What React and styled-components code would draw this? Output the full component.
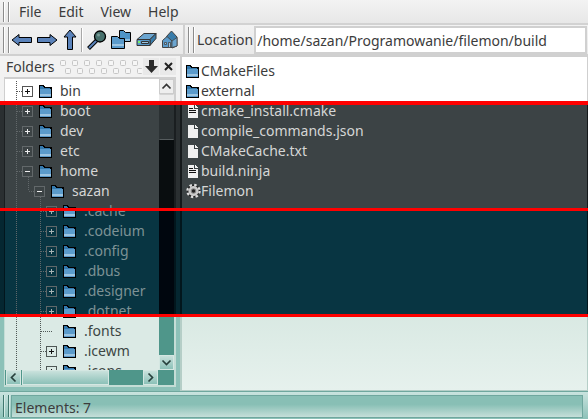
import React from "react";
import styled, { createGlobalStyle, css } from "styled-components";

const BANDS = [103, 209, 315];

const bands = (a, b, c, d) => css`
  background: linear-gradient(
    to bottom,
    ${a} 0 ${BANDS[0]}px,
    ${b} ${BANDS[0]}px ${BANDS[1]}px,
    ${c} ${BANDS[1]}px ${BANDS[2]}px,
    ${d} ${BANDS[2]}px
  ) fixed;
`;

const Global = createGlobalStyle`
  * { box-sizing: border-box; }
  html, body, #root { height: 100%; margin: 0; }
  body { overflow: hidden; font: 14px/20px "Noto Sans", "Open Sans", sans-serif; color: #3c3c3c; }
  button { font: inherit; color: inherit; border: 0; padding: 0; background: none; display: grid; place-items: center; }
  svg { display: block; }
`;

const Window = styled.div`
  position: relative;
  height: 100vh;
  display: flex;
  flex-direction: column;
  ${bands("#f2f2f2", "#2a2f31", "#052731", "#8cc1b8")}
`;

const MenuBar = styled.nav`
  display: flex;
  align-items: center;
  height: 25px;
  padding: 0 3px;
  flex: none;
  background: linear-gradient(#f3f3f3, #e7e7e7);
  border-bottom: 2px solid #d2d2d2;
`;
const MenuItem = styled.button`
  height: 22px;
  margin-right: 17px;
`;
const Grip = styled.span`
  flex: none;
  width: 6px;
  height: ${(p) => p.$h}px;
  margin-right: ${(p) => p.$gap}px;
  border: 1px solid ${(p) => p.$color || "#8c8c8c"};
  border-width: 0 1px;
  box-shadow: inset 1px 0 ${(p) => p.$shine || "#fff"}, 1px 0 ${(p) => p.$shine || "#fff"};
`;

const ToolRow = styled.div`
  display: flex;
  flex: none;
  height: 31px;
  border-bottom: 2px solid #d0d0d0;
`;
const ToolBar = styled.div`
  display: flex;
  align-items: center;
  width: 185px;
  padding-left: 3px;
  border-right: 2px solid #cfcfcf;
  background: linear-gradient(#f2f2f2, #e9e9e9);
`;
const ToolButton = styled.button`
  width: ${(p) => p.$w}px;
  height: 26px;
`;
const Separator = styled.span`
  width: 2px;
  height: 24px;
  margin-right: 3px;
  border-left: 1px solid #a8a8a8;
  border-right: 1px solid #fff;
`;
const LocationBar = styled.label`
  display: flex;
  align-items: center;
  flex: 1;
  padding-left: 3px;
  background: linear-gradient(#f2f2f2, #e9e9e9);
`;
const LocationInput = styled.input`
  flex: 1;
  min-width: 0;
  height: 28px;
  margin: 1px 1px 0 1px;
  padding: 0 1px;
  font: inherit;
  color: inherit;
  background: #fff;
  border: 2px solid #d0d0d0;
  outline: none;
`;

const Main = styled.main`
  flex: 1;
  min-height: 0;
  display: flex;
`;
const Side = styled.aside`
  width: 180px;
  flex: none;
  display: flex;
  flex-direction: column;
  padding: 0 4px 4px;
`;
const SideHeader = styled.header`
  display: flex;
  align-items: center;
  height: 21px;
  flex: none;
  padding-left: 2px;
`;
const Dots = styled.svg`
  margin-left: 6px;
  flex: 1;
  min-width: 0;
`;
const HeaderButton = styled.button`
  width: 16px;
  height: 17px;
  margin-left: 1px;
  background: #e9e9e9;
`;
const TreeFrame = styled.div`
  flex: 1;
  min-height: 0;
  display: grid;
  grid-template-columns: minmax(0, 1fr) 15px;
  grid-template-rows: minmax(0, 1fr) 15px;
  padding: 2px 2px 2px 1px;
  ${bands("#cfcfcf", "#1a1e20", "#02161d", "#c4ddd6")}
`;
const Tree = styled.ul`
  list-style: none;
  margin: 0;
  padding: 2px 0 0 1px;
  overflow: hidden;
  ${bands("#fff", "#3c4345", "#083542", "#dbeae5")}
`;
const TreeRow = styled.li`
  height: 20px;
  display: flex;
  align-items: center;
  color: ${(p) => p.$color};
`;
const Guides = styled.svg`
  flex: none;
`;
const RowLabel = styled.span`
  margin-left: 8px;
  white-space: nowrap;
`;
const VScroll = styled.div`
  display: flex;
  flex-direction: column;
  ${bands("#d8d8d8", "#090d0f", "#00060e", "#4f968a")}
`;
const VThumb = styled.div`
  height: 46px;
  border: 1px solid;
  border-color: #d4d4d4 transparent #565c5e;
  ${bands("#ececec", "#2b3133", "#00060e", "#4f968a")}
`;
const ScrollButton = styled.button`
  width: 15px;
  height: 15px;
  flex: none;
  color: #27403c;
  background: linear-gradient(#c9e1dc, #8cc1b8);
  border: 1px solid #d4e7e2;
  ${(p) => p.$light && css`
    color: #333;
    background: #eee;
    border-color: #ccc;
  `}
`;
const Spacer = styled.span`
  flex: 1;
`;
const HScroll = styled.div`
  grid-column: 1 / -1;
  display: flex;
  padding-left: 1px;
  background: #4f968a;
`;
const HThumb = styled.div`
  width: 87px;
  margin-left: 1px;
  background: linear-gradient(#c9e1dc, #8cc1b8);
  border: 1px solid #d4e7e2;
`;
const Corner = styled.span`
  width: 16px;
`;

const FileFrame = styled.section`
  flex: 1;
  min-width: 0;
  display: flex;
  padding: 1px 1px 1px 2px;
  ${bands("#cfcfcf", "#15191b", "#02161d", "#b5cec7")}
`;
const FileList = styled.ul`
  flex: 1;
  list-style: none;
  margin: 0;
  padding: 4px;
  background: linear-gradient(
    #fff 0 103px, #3c4345 103px 209px, #083542 209px 315px, #d9e9e3 315px, #e6f1ed 390px
  ) fixed;
`;
const FileRow = styled.li`
  display: flex;
  align-items: center;
  height: 20px;
  color: ${(p) => p.$color};
`;
const IconBox = styled.span`
  width: 15px;
  flex: none;
  display: grid;
  justify-items: start;
`;

const StatusBar = styled.footer`
  display: flex;
  flex: none;
  height: 28px;
  padding: 3px 5px 1px 3px;
  background: linear-gradient(#c9e3de, #8cc1b8);
  border-top: 1px solid #6fa79e;
`;
const StatusText = styled.output`
  flex: 1;
  padding-left: 3px;
  line-height: 23px;
  background: linear-gradient(#88bfb5 40%, #c5dfd9);
  border: 1px solid #6fa79e;
`;
const BandLine = styled.div`
  position: absolute;
  left: 0;
  right: 0;
  top: ${(p) => p.$top}px;
  height: ${(p) => p.$h}px;
  background: #f00;
`;

const Folder = () => (
  <svg width="13" height="13" shapeRendering="crispEdges">
    <path d="M0 0h5v1h1v1h7v11H0z" fill="#000" />
    <path d="M1 1h3v1h1v1h6v1H1z" fill="#3479ad" />
    <path d="M1 4h11v8H1z" fill="#5b9bcb" />
    <path d="M1 9h11v2H1z" fill="#9cc5e2" />
  </svg>
);
const Doc = ({ lines }) => (
  <svg width="13" height="14" shapeRendering="crispEdges">
    <path d="M2 1h6v4h4v9H2zM9 1h1v1h1v1h1v1H9z" fill="#f0f0f0" />
    {lines && <path d="M3 4.500h4M3 6.500h7M3 8.500h7" stroke="#111" />}
  </svg>
);
const Gear = () => (
  <svg width="15" height="16" viewBox="0 0 16 16">
    <circle cx="8" cy="8" r="6.800" fill="#222" />
    <circle cx="8" cy="8" r="6.500" fill="none" stroke="#ddd" strokeWidth="2.400" strokeDasharray="2.600 2.505" />
    <circle cx="8" cy="8" r="4.200" fill="#888" stroke="#ccc" strokeWidth="2.500" />
    <circle cx="8" cy="8" r="1.800" fill="#222" />
  </svg>
);
const Arrow = ({ dir }) => {
  if (dir === "up")
    return (
      <svg width="14" height="21">
        <path d="M7 1L13 8H9.500V20.500H4.500V8H1z" fill="#5b83bb" stroke="#000" />
      </svg>
    );
  return (
    <svg width="22" height="14">
      <path
        d={dir === "left" ? "M1 7L8 1.500V4.500H20.500V9.500H8V12.500z" : "M21 7L14 1.500V4.500H1.500V9.500H14V12.500z"}
        fill="#5b83bb"
        stroke="#000"
      />
    </svg>
  );
};
const Magnifier = () => (
  <svg width="20" height="20">
    <path d="M1.500 18.500L10 10" stroke="#000" strokeWidth="4" />
    <path d="M2 18L10 10" stroke="#5b83bb" strokeWidth="2" />
    <circle cx="13" cy="6.500" r="5.500" fill="#47706c" stroke="#000" strokeWidth="1.300" />
    <circle cx="11.500" cy="5" r="1.500" fill="#7a9c98" />
  </svg>
);
const Folders = () => (
  <svg width="20" height="20">
    <path d="M8.500 .5h4l2 2h5v9h-11z" fill="#4f94c6" stroke="#000" />
    <path d="M9 9h10v2H9z" fill="#8fbfe0" />
    <path d="M.5 6.500h6l2 2h5v10H.5z" fill="#5b9bcb" stroke="#000" />
    <path d="M1 14h12v2H1z" fill="#9cc5e2" />
  </svg>
);
const Drive = () => (
  <svg width="21" height="16">
    <path d="M1 7.500L8 1.500h12l-6 6z" fill="#6ba5d0" stroke="#333" />
    <path d="M14 7.500l6-6v5l-6 7z" fill="#397caa" stroke="#333" />
    <path d="M1 7.500h13v6H1z" fill="#5b9bcb" stroke="#333" />
    <path d="M5.500 9.500h7v2h-7z" fill="#9cc5e2" stroke="#333" />
    <path d="M2 9h2v2H2z" fill="#78ed69" />
  </svg>
);
const House = () => (
  <svg width="18" height="19">
    <path d="M5.500 6.500L10.500 1l5.500 6v9l-5 2z" fill="#397caa" stroke="#444" />
    <path d="M1.500 10.500L6 6.500l5 4.500v6.500H1.500z" fill="#5b9bcb" stroke="#444" />
    <path d="M3.500 12.500h2v2h-2zM7.500 12.500h2v5h-2z" fill="#9cc5e2" stroke="#444" strokeWidth=".8" />
    <path d="M11 11l5-3.500v8.500l-5 1.500z" fill="#6ba5d0" stroke="#444" strokeWidth=".8" />
  </svg>
);
const Chevron = ({ d }) => (
  <svg width="11" height="11" fill="none" stroke="currentColor" strokeWidth="1.700">
    <path d={d} />
  </svg>
);

const TONES = {
  light: { text: "#3c3c3c", line: "#555", sign: "#111" },
  dark: { text: "#d5d6d5", line: "#62686a", sign: "#eee" },
  night: { text: "#7d9295", line: "#5f686a", sign: "#a7b4b5" },
  mint: { text: "#3c4644", line: "#4f5856", sign: "#111" },
};

const tree = [
  ["bin", 0, "+", "light"],
  ["boot", 0, "+", "dark"],
  ["dev", 0, "+", "dark"],
  ["etc", 0, "+", "dark"],
  ["home", 0, "-", "dark"],
  ["sazan", 1, "-", "dark"],
  [".cache", 2, "+", "night"],
  [".codeium", 2, "+", "night"],
  [".config", 2, "+", "night"],
  [".dbus", 2, "+", "night"],
  [".designer", 2, "+", "night"],
  [".dotnet", 2, "+", "night"],
  [".fonts", 2, "", "mint"],
  [".icewm", 2, "+", "mint"],
  [".icons", 2, "+", "mint"],
];

const files = [
  ["CMakeFiles", "folder", "light"],
  ["external", "folder", "light"],
  ["cmake_install.cmake", "lines", "dark"],
  ["compile_commands.json", "doc", "dark"],
  ["CMakeCache.txt", "doc", "dark"],
  ["build.ninja", "lines", "dark"],
  ["Filemon", "gear", "dark"],
];

const Branch = ({ level, sign, tone }) => {
  const x = 16 + level * 12;
  const t = TONES[tone];
  return (
    <Guides width={33 + level * 12} height="20" shapeRendering="crispEdges">
      <g stroke={t.line} strokeDasharray="1 1">
        <path d="M10.500 0V20" />
        {level === 1 && <path d="M22.500 0V10" />}
        {level === 2 && <path d="M34.500 0V20" />}
        <path d={`M${x - 5} 10.500H${sign ? x : x + 7}`} />
        {sign === "-" && <path d={`M${x + 6.5} 16V20`} />}
      </g>
      {sign && (
        <>
          <rect x={x + 0.5} y="5.500" width="10" height="10" fill="none" stroke={t.line} />
          <path d={`M${x + 3} 10.500h5${sign === "+" ? "m-2.500 -2.500v5" : ""}`} stroke={t.sign} fill="none" />
        </>
      )}
    </Guides>
  );
};

export default function App() {
  return (
    <>
      <Global />
      <Window>
        <MenuBar>
          <Grip $h={20} $gap={10} />
          {["File", "Edit", "View", "Help"].map((m) => (
            <MenuItem key={m}>{m}</MenuItem>
          ))}
        </MenuBar>
        <ToolRow>
          <ToolBar>
            <Grip $h={26} $gap={1} />
            <ToolButton $w={24} aria-label="Back"><Arrow dir="left" /></ToolButton>
            <ToolButton $w={25} aria-label="Forward"><Arrow dir="right" /></ToolButton>
            <ToolButton $w={22} aria-label="Up"><Arrow dir="up" /></ToolButton>
            <Separator />
            <ToolButton $w={22} aria-label="Search"><Magnifier /></ToolButton>
            <ToolButton $w={26} aria-label="Folders"><Folders /></ToolButton>
            <ToolButton $w={24} aria-label="Drive"><Drive /></ToolButton>
            <ToolButton $w={23} aria-label="Home"><House /></ToolButton>
          </ToolBar>
          <LocationBar>
            <Grip $h={26} $gap={3} />
            Location
            <LocationInput defaultValue="/home/sazan/Programowanie/filemon/build" />
          </LocationBar>
        </ToolRow>
        <Main>
          <Side>
            <SideHeader>
              Folders
              <Dots height="16">
                <g fill="#f6f6f6" stroke="#c6c6c6">
                  {[0, 1, 2, 3, 4, 5, 6].map((i) => (
                    <g key={i}>
                      <rect x={0.5 + i * 12} y="1.500" width="5" height="5" rx="1" />
                      <rect x={5.5 + i * 12} y="9.500" width="5" height="5" rx="1" />
                    </g>
                  ))}
                </g>
              </Dots>
              <HeaderButton aria-label="Dock">
                <svg width="13" height="13"><path d="M4 0h5v6h4L6.500 13 0 6h4z" fill="#2c2c2c" /></svg>
              </HeaderButton>
              <HeaderButton aria-label="Close">
                <svg width="9" height="9"><path d="M1 1l7 7M8 1L1 8" stroke="#222" strokeWidth="2" /></svg>
              </HeaderButton>
            </SideHeader>
            <TreeFrame>
              <Tree>
                {tree.map(([name, level, sign, tone]) => (
                  <TreeRow key={name} $color={TONES[tone].text}>
                    <Branch level={level} sign={sign} tone={tone} />
                    <Folder />
                    <RowLabel>{name}</RowLabel>
                  </TreeRow>
                ))}
              </Tree>
              <VScroll>
                <ScrollButton $light aria-label="Scroll up"><Chevron d="M1.500 7.500l4-4 4 4" /></ScrollButton>
                <VThumb />
                <Spacer />
                <ScrollButton aria-label="Scroll down"><Chevron d="M1.500 3.500l4 4 4-4" /></ScrollButton>
              </VScroll>
              <HScroll>
                <ScrollButton aria-label="Scroll left"><Chevron d="M7.500 1.500l-4 4 4 4" /></ScrollButton>
                <HThumb />
                <Spacer />
                <ScrollButton aria-label="Scroll right"><Chevron d="M3.500 1.500l4 4-4 4" /></ScrollButton>
                <Corner />
              </HScroll>
            </TreeFrame>
          </Side>
          <FileFrame>
            <FileList>
              {files.map(([name, kind, tone]) => (
                <FileRow key={name} $color={TONES[tone].text}>
                  <IconBox>
                    {kind === "folder" ? <Folder /> : kind === "gear" ? <Gear /> : <Doc lines={kind === "lines"} />}
                  </IconBox>
                  {name}
                </FileRow>
              ))}
            </FileList>
          </FileFrame>
        </Main>
        <StatusBar>
          <Grip $h={22} $gap={2} $color="#3f776e" $shine="#d4ebe6" />
          <StatusText>Elements: 7</StatusText>
        </StatusBar>
        <BandLine $top={101} $h={4} />
        <BandLine $top={208} $h={3} />
        <BandLine $top={314} $h={3} />
      </Window>
    </>
  );
}
